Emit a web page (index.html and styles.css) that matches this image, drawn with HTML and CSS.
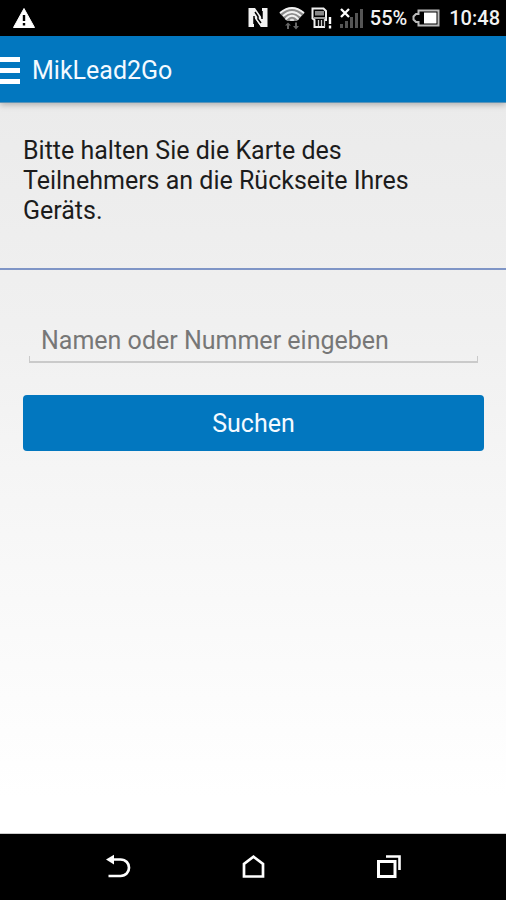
FILE: index.html
```html
<!DOCTYPE html>
<html lang="de">
<head>
<meta charset="utf-8">
<meta name="viewport" content="width=device-width, initial-scale=1">
<title>MikLead2Go</title>
<link rel="stylesheet" href="styles.css">
</head>
<body>
<div class="status">
  <svg class="warning" width="24" height="22" viewBox="0 0 24 22" aria-hidden="true">
    <path d="M12 1.500 22.500 20.500H1.500Z" fill="#fff" stroke="#fff" stroke-linejoin="round"/>
    <path d="M12 8v6M12 16v2.500" stroke="#000" stroke-width="2.400"/>
  </svg>
  <div class="status-icons">
    <svg width="20" height="22" viewBox="0 0 20 22" aria-hidden="true">
      <path d="M0.500 1H7L14 11V1H19.500V20H13L6 10V20H0.500Z" fill="#f2f2f2"/>
      <path d="M6 5.500V10L13 20V15.500" fill="#f2f2f2"/>
      <path d="M7 5 10 9.500V12L13 16" fill="none" stroke="#000" stroke-width="1.500"/>
      <path d="M6 9V17M14 4V12" stroke="#000" stroke-width="1.500"/>
    </svg>
    <svg width="26" height="24" viewBox="0 0 26 24" aria-hidden="true">
      <path d="M0.500 7Q13-3.500 25.500 7L18 15H8Z" fill="#8c8c8c"/>
      <path d="M1 7Q13-3 25 7M4 10Q13 2 22 10M6.500 13.500Q13 6 19.500 13.500" fill="none" stroke="#f2f2f2" stroke-width="1.800"/>
      <path d="M10.500 14Q13 11.500 15.500 14L14.500 15H11.500Z" fill="#ddd"/>
      <path d="M9 16.500 12 19.500H10V23H8V19.500H6ZM17 23.500 14 20H16V16.500H18V20H20Z" fill="#666"/>
    </svg>
    <svg width="22" height="22" viewBox="0 0 22 22" aria-hidden="true">
      <path d="M14 20H3.500V13L1.500 11.500V1.500H12.500L15 4V14" fill="none" stroke="#f0f0f0" stroke-width="2"/>
      <path d="M4 4H13V8.500H4Z" fill="#8a8a8a"/>
      <path d="M3 11H15M7.500 13V19M10.500 13V19M13.500 12V20" stroke="#ccc" stroke-width="1.300"/>
      <path d="M19 10V17M19 18.500V21.500" stroke="#fff" stroke-width="2.400"/>
    </svg>
    <svg width="24" height="22" viewBox="0 0 24 22" aria-hidden="true">
      <path d="M1 17H4V21H1ZM6 14H9V21H6ZM11 10H14V21H11ZM16 6H19V21H16ZM21 2H24V21H21Z" fill="#555"/>
      <path d="M2 2 10 10M10 2 2 10" stroke="#fff" stroke-width="2.300"/>
    </svg>
  </div>
  <span class="percent">55%</span>
  <svg class="battery" width="28" height="18" viewBox="0 0 28 18" aria-hidden="true">
    <path d="M6.500 1.500H26.500V16.500H6.500V13H4L1.500 10.500V7.500L4 5H6.500Z" fill="#000" stroke="#bbb" stroke-width="2"/>
    <path d="M12 3.500H24.500V14.500H12Z" fill="#fff"/>
  </svg>
  <time>10:48</time>
</div>
<header class="appbar">
  <button class="menu" type="button" aria-label="Menü"><span></span><span></span><span></span></button>
  <h1>MikLead2Go</h1>
</header>
<main>
  <p class="hint">Bitte halten Sie die Karte des Teilnehmers an die Rückseite Ihres Geräts.</p>
  <form class="search">
    <div class="field"><input type="text" aria-label="Namen oder Nummer eingeben" placeholder="Namen oder Nummer eingeben"></div>
    <button class="submit" type="button">Suchen</button>
  </form>
</main>
<nav class="navbar">
  <button type="button" aria-label="Zurück">
    <svg width="26" height="26" viewBox="0 0 26 26" aria-hidden="true">
      <path d="M6 5.500H15.500C21 5.500 24 9.500 24 13.700S21 22 15.500 22H3.500" fill="none" stroke="#fff" stroke-width="2.700"/>
      <path d="M1 5.500 9 0.800V10.500Z" fill="#fff"/>
    </svg>
  </button>
  <button type="button" aria-label="Startseite">
    <svg width="26" height="26" viewBox="0 0 26 26" aria-hidden="true">
      <path d="M4 22.500V10L13.500 2.700 23 10V22.500Z" fill="none" stroke="#fff" stroke-width="2.700"/>
    </svg>
  </button>
  <button type="button" aria-label="Letzte Apps">
    <svg width="26" height="26" viewBox="0 0 26 26" aria-hidden="true">
      <path d="M3.500 7.500H20V22.500H3.500Z" fill="none" stroke="#fff" stroke-width="3"/>
      <path d="M11 2.500H24.500V16" fill="none" stroke="#fff" stroke-width="2.600"/>
    </svg>
  </button>
</nav>
</body>
</html>
```
FILE: styles.css
```css
* {
  box-sizing: border-box;
}

body {
  margin: 0;
  min-height: 100vh;
  display: flex;
  flex-direction: column;
  font-family: Roboto, "Liberation Sans", sans-serif;
  font-size: 25px;
  color: #1c1c1c;
  background: #000;
}

button,
input {
  margin: 0;
  border: 0;
  padding: 0;
  border-radius: 0;
  background: none;
  font: inherit;
}

svg {
  display: block;
  flex: none;
}

.status {
  height: 36px;
  padding: 0 6px 0 12px;
  display: flex;
  align-items: center;
  font-size: 20px;
  font-weight: 500;
  color: #f2f2f2;
}

.status-icons {
  margin-left: auto;
  margin-right: 7px;
  display: flex;
  align-items: center;
  gap: 6px;
}

.status-icons svg:first-child {
  margin-right: 5px;
}

.battery {
  margin: 0 9px 0 5px;
}

.appbar {
  position: relative;
  height: 67px;
  padding-top: 2px;
  display: flex;
  align-items: center;
  gap: 12px;
  background: #0277bf;
  color: #f4faff;
  border-bottom: 1px solid #5a93b8;
  box-shadow: 0 2px 6px rgba(0, 0, 0, 0.25);
}

.menu {
  width: 20px;
  display: flex;
  flex-direction: column;
  gap: 6px;
}

.menu span {
  height: 5px;
  width: 100%;
  background: #fff;
}

h1 {
  margin: 0;
  font-size: 25px;
  font-weight: 400;
}

main {
  flex: 1;
  background: linear-gradient(#ebebeb, #f0f0f0 30%, #f5f5f5 50%, #fff 95%);
  border-bottom: 1px solid #ccc;
}

.hint {
  margin: 0;
  height: 167px;
  padding: 33px 80px 0 23px;
  line-height: 30px;
  border-bottom: 2px solid #7f95c6;
}

.search {
  padding: 48px 22px 0 23px;
}

.field {
  padding: 0 6px;
  margin-bottom: 32px;
}

.field input {
  display: block;
  width: 100%;
  height: 45px;
  padding: 2px 11px 0;
  color: #1c1c1c;
  outline: 0;
  border: solid #cacaca;
  border-width: 0 1px 2px;
  border-image: linear-gradient(transparent 38px, #cacaca 38px) 0 1 2 1;
}

.field input::placeholder {
  color: #777;
  opacity: 1;
}

.submit {
  width: 100%;
  height: 56px;
  border-radius: 4px;
  background: #0277bf;
  color: #f4faff;
}

.navbar {
  height: 66px;
  padding: 0 10%;
  display: flex;
}

.navbar button {
  flex: 1;
  display: flex;
  align-items: center;
  justify-content: center;
}
```
